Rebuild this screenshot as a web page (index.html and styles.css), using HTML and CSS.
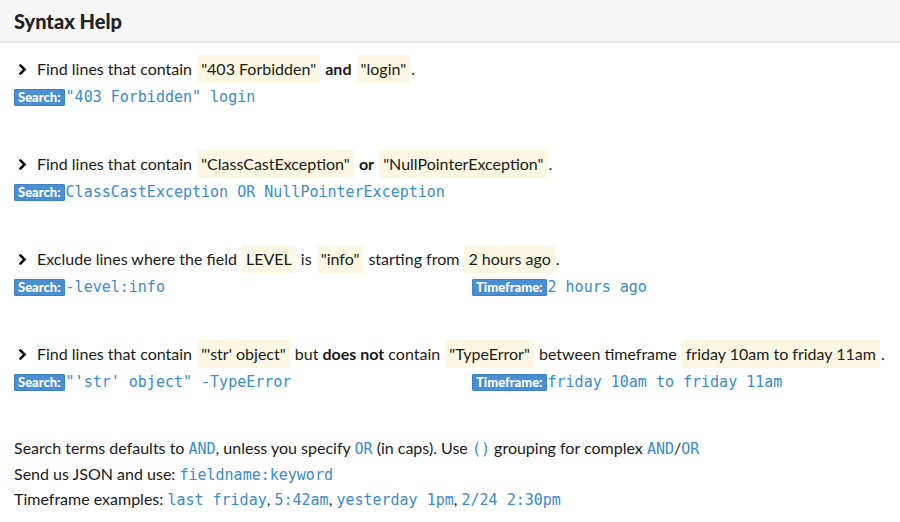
FILE: index.html
```html
<!DOCTYPE html>
<html>
<head>
<meta charset="utf-8">
<link rel="stylesheet" href="styles.css">
</head>
<body>
<div class="header"><h1 class="title">Syntax Help</h1></div>
<div class="content">
  <div class="example">
    <div class="sentence"><svg class="chev" viewBox="0 0 8 11"><polyline points="1.4,1.4 5.6,5.5 1.4,9.6"/></svg><span>Find lines that contain <span class="hl">"403 Forbidden"</span> <b>and</b> <span class="hl">"login"</span>.</span></div>
    <div class="queries"><div class="q"><span class="badge">Search:</span><code>"403 Forbidden" login</code></div></div>
  </div>
  <div class="example">
    <div class="sentence"><svg class="chev" viewBox="0 0 8 11"><polyline points="1.4,1.4 5.6,5.5 1.4,9.6"/></svg><span>Find lines that contain <span class="hl">"ClassCastException"</span> <b>or</b> <span class="hl">"NullPointerException"</span>.</span></div>
    <div class="queries"><div class="q"><span class="badge">Search:</span><code>ClassCastException OR NullPointerException</code></div></div>
  </div>
  <div class="example">
    <div class="sentence"><svg class="chev" viewBox="0 0 8 11"><polyline points="1.4,1.4 5.6,5.5 1.4,9.6"/></svg><span>Exclude lines where the field <span class="hl">LEVEL</span> is <span class="hl">"info"</span> starting from <span class="hl">2 hours ago</span>.</span></div>
    <div class="queries"><div class="q"><span class="badge">Search:</span><code>-level:info</code></div><div class="q"><span class="badge">Timeframe:</span><code>2 hours ago</code></div></div>
  </div>
  <div class="example">
    <div class="sentence"><svg class="chev" viewBox="0 0 8 11"><polyline points="1.4,1.4 5.6,5.5 1.4,9.6"/></svg><span>Find lines that contain <span class="hl">"'str' object"</span> but <b>does not</b> contain <span class="hl">"TypeError"</span> between timeframe <span class="hl">friday 10am to friday 11am</span>.</span></div>
    <div class="queries"><div class="q"><span class="badge">Search:</span><code>"'str' object" -TypeError</code></div><div class="q"><span class="badge">Timeframe:</span><code>friday 10am to friday 11am</code></div></div>
  </div>
  <div class="notes">
    <p>Search terms defaults to <code>AND</code>, unless you specify <code>OR</code> (in caps). Use <code>()</code> grouping for complex <code>AND</code>/<code>OR</code></p>
    <p>Send us JSON and use: <code>fieldname:keyword</code></p>
    <p>Timeframe examples: <code>last friday</code>, <code>5:42am</code>, <code>yesterday 1pm</code>, <code>2/24 2:30pm</code></p>
  </div>
</div>
</body>
</html>
```
FILE: styles.css
```css
html, body {
  margin: 0;
  padding: 0;
  background: #ffffff;
}
body {
  font-family: Lato, "Open Sans", sans-serif;
  font-size: 16px;
  color: #1a1a1a;
}
.header {
  height: 41px;
  background: #f7f7f7;
  border-bottom: 2px solid #e9e9e9;
  display: flex;
  align-items: center;
  padding: 0 14px;
}
.title {
  margin: 0;
  font-size: 20px;
  font-weight: 900;
  color: #222;
}
.content {
  padding: 12px 14px 0 14px;
}
.example {
  margin-bottom: 43px;
}
.sentence {
  display: flex;
  align-items: center;
  height: 28px;
  line-height: 28px;
  white-space: nowrap;
}
.chev {
  width: 8px;
  height: 11px;
  margin-left: 5px;
  margin-right: 10px;
  fill: none;
  stroke: #111;
  stroke-width: 2.6;
  stroke-linecap: round;
  stroke-linejoin: miter;
  flex: none;
}
.hl {
  display: inline-block;
  background: #fcf8e3;
  padding: 0 4px;
  margin: 0 1px;
  line-height: 28px;
}
b {
  font-weight: 700;
}
.queries {
  display: grid;
  grid-template-columns: 458px auto;
  margin-top: 4px;
  height: 20px;
  align-items: center;
}
.q {
  display: flex;
  align-items: center;
}
.badge {
  display: inline-block;
  background: #4a8fd1;
  color: #fff;
  font-weight: 900;
  font-size: 13px;
  line-height: 17px;
  height: 17px;
  padding: 0 4px;
  border-radius: 2px;
  box-shadow: inset 0 0 0 1px #3f82c2;
}
code {
  font-family: "DejaVu Sans Mono", "Liberation Mono", monospace;
  font-size: 15px;
  color: #3a8bd0;
}
.q code {
  margin-left: 1px;
}
.notes p {
  margin: 0;
  line-height: 25.5px;
}
.notes code {
  line-height: 1;
}
```
